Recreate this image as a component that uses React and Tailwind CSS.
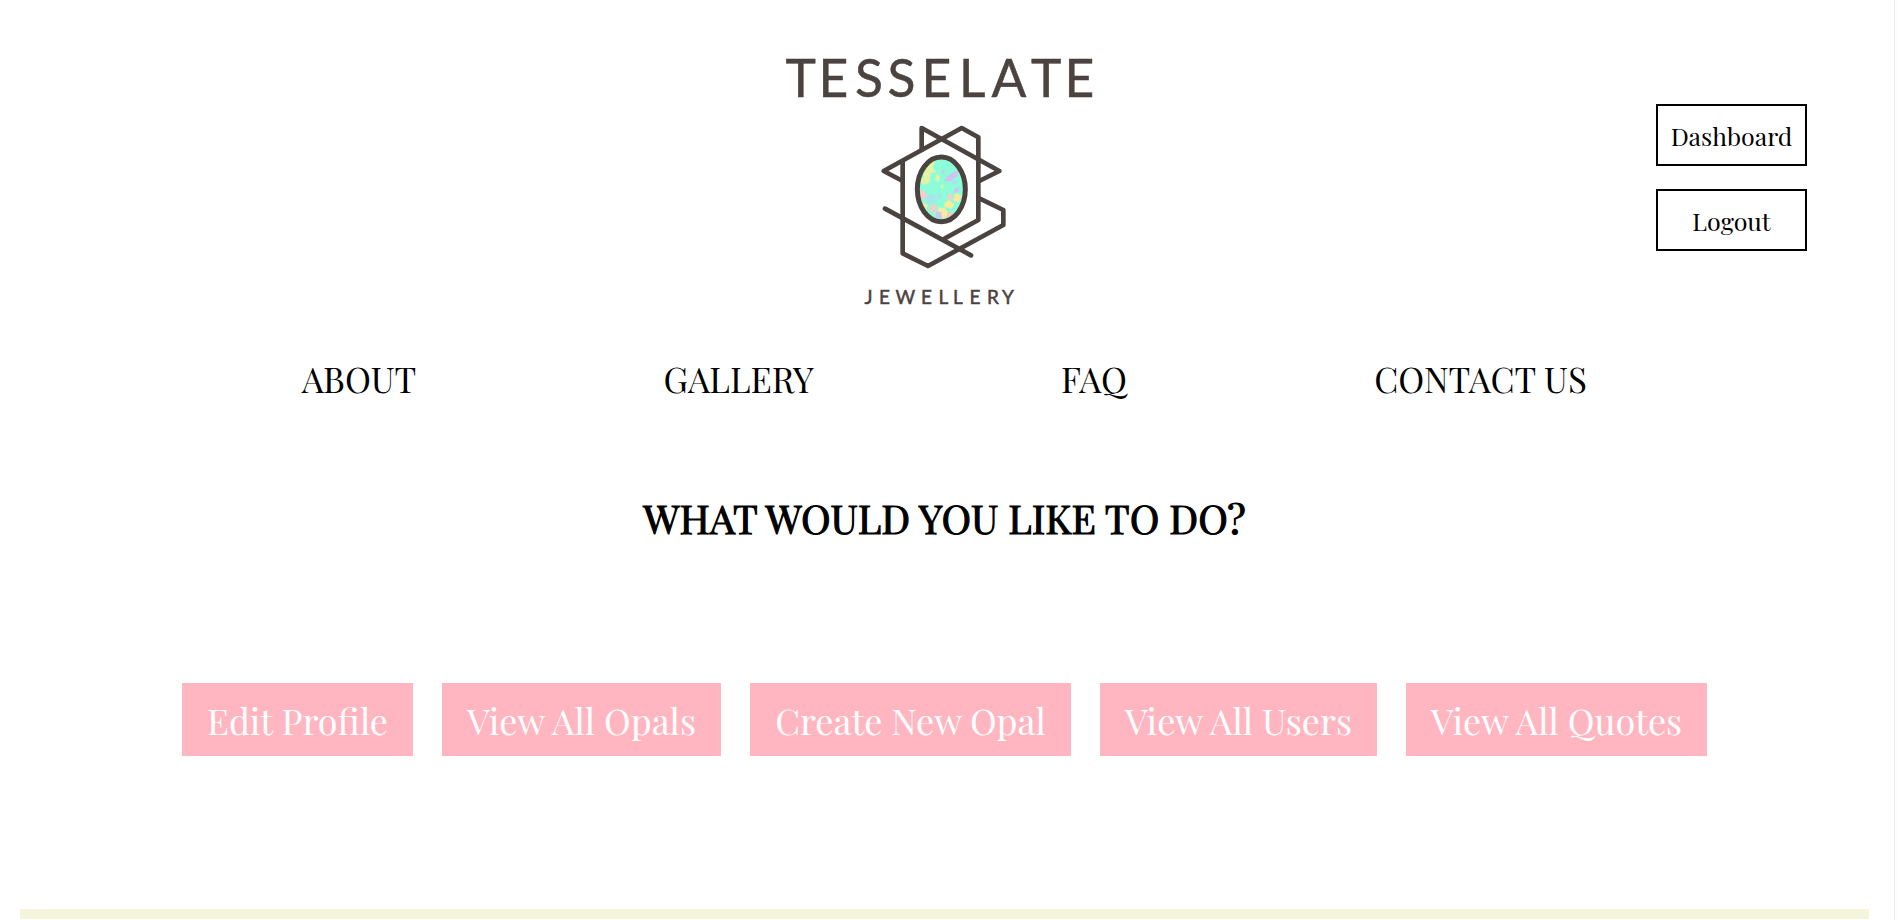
const navItems = [
  { label: 'ABOUT', box: 'w-[114px]' },
  { label: 'GALLERY', box: 'w-[149px]' },
  { label: 'FAQ', box: 'w-[66px]' },
  { label: 'CONTACT US', box: 'w-[211px]' },
];

const actions = [
  { label: 'Edit Profile', box: 'w-[231px]' },
  { label: 'View All Opals', box: 'w-[279px]' },
  { label: 'Create New Opal', box: 'w-[321px]' },
  { label: 'View All Users', box: 'w-[277px]' },
  { label: 'View All Quotes', box: 'w-[301px]' },
];

function Logo() {
  return (
    <svg width="352" height="272" viewBox="0 0 352 272" className="shrink-0">
      <g fill="#4a433f" stroke="#4a433f" fontFamily="Lato, sans-serif">
        <text x="15.5 48.5 85 117.5 151.5 189 221.5 261 294.5" y="53.7" fontSize="51.5" strokeWidth="0.5">
          TESSELATE
        </text>
        <text x="94.5 109 125.5 151 168.5 183 199.5 217 232" y="260.5" fontSize="19" strokeWidth="0.5">
          JEWELLERY
        </text>
      </g>
      <defs>
        <clipPath id="opal">
          <ellipse cx="244" cy="238" rx="67" ry="92" />
        </clipPath>
      </defs>
      <g transform="translate(90 67) scale(0.33333)">
        <g clipPath="url(#opal)">
          <rect x="170" y="135" width="150" height="205" fill="#8dfcd9" />
          <g fill="#dcf3a8">
            <path d="M205 160l22-10-8 24 10 12-16 4-4 28-18 6-10-8 14-18-4-14z" />
            <path d="M176 200l18 8 14-4-6 18-26-4z" />
            <path d="M232 190l8 12-4 14-12-6z" />
            <path d="M186 278l18 6-6 20-18-8z" />
            <path d="M240 228l12-6-4 16z" />
          </g>
          <g fill="#f8eb9c">
            <path d="M254 278l14-8 14 12-6 14-24-6z" />
            <path d="M240 292l18 4 8 20-14 10-26-14z" />
            <path d="M286 250l20 6-10 22-16-6z" />
            <path d="M196 186l8 8-8 12-6-8z" />
          </g>
          <g fill="#cfc4f4">
            <path d="M284 184l14-4-8 20-22 16-18-4 14-14z" />
            <path d="M282 236l16-4-2 14-12 2z" />
            <path d="M248 180l8 4-4 8-8-4z" />
            <path d="M228 304l16 2 2 20-18-4z" />
          </g>
          <g fill="#f5cdc8">
            <path d="M178 248l10-10 12 14-2 14-16 2z" />
            <path d="M220 282l12 6-8 22-14-6-2-12z" />
            <path d="M264 250l16 4-4 18-14-4z" />
            <path d="M262 310l16-6-4 22-18 8z" />
          </g>
          <g fill="#a6e6ea">
            <path d="M198 256l18-4 16 12-10 16-22 2z" />
            <path d="M232 248l14 4-6 16-10-4z" />
            <path d="M280 206l14 8-6 12-14-4z" />
          </g>
        </g>
        <g fill="none" stroke="#4a433f" strokeWidth="14" strokeLinecap="round" strokeLinejoin="round">
          <path d="M185 120V54L418 183L358 213" />
          <path d="M128 213L71 183L305 54L355 82V330L250 388" />
          <path d="M128 155V430L204 468L430 345V300L358 265" />
          <path d="M75 296L333 436" />
          <ellipse cx="244" cy="238" rx="72" ry="97" strokeWidth="15" />
        </g>
      </g>
    </svg>
  );
}

function AccountButton({ children }) {
  return (
    <button className="flex h-[62px] w-[151px] items-center justify-center border-2 border-black pt-px text-[25px] leading-none whitespace-nowrap">
      {children}
    </button>
  );
}

export default function App() {
  return (
    <div className="flex h-[920px] justify-between overflow-hidden bg-white font-['Playfair_Display','Liberation_Serif',serif] text-black">
      <div className="flex w-[1869px] flex-col pl-[20px]">
        <header className="grid grid-cols-[750px_352px_1fr] pt-[43px]">
          <div />
          <Logo />
          <div className="flex flex-col items-end gap-[23px] pt-[61px] pr-[62px]">
            <AccountButton>Dashboard</AccountButton>
            <AccountButton>Logout</AccountButton>
          </div>
        </header>

        <nav className="mt-[43px] flex h-[40px] items-center gap-[248px] pl-[282px] text-[35px] leading-none whitespace-nowrap">
          {navItems.map((item) => (
            <a key={item.label} href="#" className={`flex justify-center ${item.box}`}>
              {item.label}
            </a>
          ))}
        </nav>

        <h1 className="mt-[96px] flex h-[48px] items-center justify-center text-[40px] leading-none whitespace-nowrap [-webkit-text-stroke:1.1px_black]">
          WHAT WOULD YOU LIKE TO DO?
        </h1>

        <main className="mt-[141px] flex gap-[29px] pl-[162px] text-[36px] leading-none whitespace-nowrap text-white">
          {actions.map((item) => (
            <button key={item.label} className={`flex h-[73px] shrink-0 items-center justify-center bg-[#ffb6c1] ${item.box}`}>
              {item.label}
            </button>
          ))}
        </main>

        <div className="mt-[153px] h-[10px] shrink-0 bg-[#f5f5dc]" />
      </div>
      <div className="w-[4px] border-l border-[#ececec] bg-[#fdfdfd]" />
    </div>
  );
}
